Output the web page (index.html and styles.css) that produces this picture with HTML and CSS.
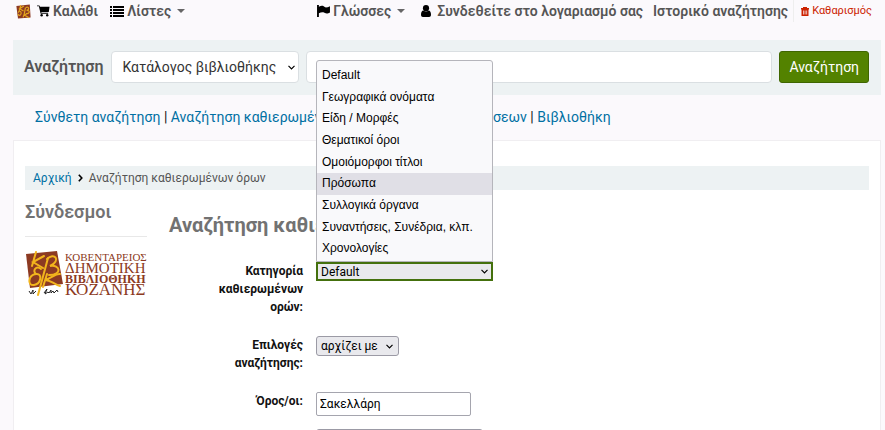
FILE: index.html
```html
<!DOCTYPE html>
<html lang="el">
<head>
    <meta charset="UTF-8">
    <meta name="viewport" content="width=device-width, initial-scale=1">
    <title>Αναζήτηση καθιερωμένων όρων</title>

    <link rel="stylesheet" href="styles.css">
</head>
<body>
    <nav class="navbar">
        <a class="brand" href="#" aria-label="Αρχική">
            <svg width="15" height="15" viewBox="0 0 38 38">
                <path fill="#8c3a22" d="M1 5 35 1 37 34 5 37z"/>
                <path fill="none" stroke="#e3a51d" stroke-width="3" d="M12 3 8 18M20 5 9 12 19 18M24 9 20 30M25 9c8-4 10 5 2 7 10 0 8 10-2 8M6 22c0-6 8-4 7 2s-7 7-8 1M18 34l4-12M33 22 21 28 33 35"/>
            </svg>
        </a>
        <a class="nav-link cart" href="#">
            <svg width="13" height="12" viewBox="0 0 14 12">
                <path d="M0 0h2.600l.6 1.500H13.500L12.700 7H4.600l.2 1H12v1H3.900L2 1H0z"/>
                <circle cx="5" cy="10.500" r="1.300"/><circle cx="11" cy="10.500" r="1.300"/>
            </svg>
            Καλάθι
        </a>
        <a class="nav-link lists" href="#">
            <svg width="14" height="11" viewBox="0 0 14 11">
                <path d="M0 0h2v2H0zM3 0h11v2H3zM0 3h2v2H0zM3 3h11v2H3zM0 6h2v2H0zM3 6h11v2H3zM0 9h2v2H0zM3 9h11v2H3z"/>
            </svg>
            Λίστες <span class="caret"></span>
        </a>
        <a class="nav-link langs" href="#">
            <svg width="13" height="12" viewBox="0 0 14 13">
                <path d="M0 0h2v13H0zM2 2c3-2 5-1 6 0s3 1 6-.6V8c-3 1.700-4 1.200-6 .4S4 8 2 9z"/>
            </svg>
            Γλώσσες <span class="caret"></span>
        </a>
        <a class="nav-link login" href="#">
            <svg width="10" height="12" viewBox="0 0 11 13">
                <circle cx="5.500" cy="3.400" r="3.400"/>
                <path d="M2.600 6c2 1.500 4 1.500 5.800 0C10 6 11 8 11 10.500 11 12 10 13 9 13H2c-1 0-2-1-2-2.500C0 8 1 6 2.600 6z"/>
            </svg>
            Συνδεθείτε στο λογαριασμό σας
        </a>
        <a class="nav-link history" href="#">Ιστορικό αναζήτησης</a>
        <a class="clear" href="#">
            <svg width="8" height="9" viewBox="0 0 8 9">
                <path fill="#cc2200" fill-rule="evenodd" d="M2 0h4v1h2v1.500H7.500V9h-7V2.500H0V1h2zM2 3.500v4h.7v-4zM3.700 3.500v4h.7v-4zM5.400 3.500v4h.7v-4z"/>
            </svg>
            Καθαρισμός
        </a>
    </nav>

    <form class="search-bar">
        <label for="index">Αναζήτηση</label>
        <select id="index" class="search-index">
            <option>Κατάλογος βιβλιοθήκης</option>
        </select>
        <input type="text" class="search-text" aria-label="Αναζήτηση">
        <button type="submit" class="btn">Αναζήτηση</button>
    </form>

    <div class="more-searches">
        <a href="#">Σύνθετη αναζήτηση</a> |
        <a href="#">Αναζήτηση καθιερωμένων όρων</a> |
        <a href="#">Σύννεφο σημειώσεων</a> |
        <a href="#">Βιβλιοθήκη</a>
    </div>

    <main class="main">
        <nav class="breadcrumb">
            <a href="#">Αρχική</a>
            <svg width="5" height="8" viewBox="0 0 5 8"><path fill="none" stroke="#000" stroke-width="1.600" d="M.8.800 3.800 4 .8 7.200"/></svg>
            <span>Αναζήτηση καθιερωμένων όρων</span>
        </nav>

        <div class="columns">
            <aside class="side">
                <h2>Σύνδεσμοι</h2>
                <a href="#" aria-label="Κοβεντάρειος Δημοτική Βιβλιοθήκη Κοζάνης">
                    <svg class="logo" viewBox="0 0 122 48">
                        <path fill="#8c3a22" d="M1 3 32 0 38 33 5 37z"/>
                        <g fill="none" stroke="#f2b51d" stroke-width="2" stroke-linecap="round">
                            <path d="M11 1 7 15M19 5 8 11 18 17"/>
                            <path d="M23 7 13 44"/>
                            <path d="M22 8c7-7 15 1 3 7 10-2 13 9-1 9"/>
                            <path d="M16 18c-5-4-9 2-5 5-8 1-9 12-2 11s9-12 2-11"/>
                            <path d="M22 23 18 36M35 23c-4-1-8 4-15 6 6 0 8 4 15 6"/>
                        </g>
                        <path fill="none" stroke="#222" d="M4 40l2 3 2-4v4l3-3M19 42l3-4-2 5 3-2 1 1 2-3v3l2-2 1 2 3-3 1 2"/>
                        <g class="logo-text" fill="#8c3a22">
                            <text class="narrow" x="40" y="10">ΚΟΒΕΝΤΑΡΕΙΟΣ</text>
                            <text class="wide" x="40" y="22">ΔΗΜΟΤΙΚΗ</text>
                            <text class="heavy" x="40" y="32">ΒΙΒΛΙΟΘΗΚΗ</text>
                            <text class="large" x="40" y="44">ΚΟΖΑΝΗΣ</text>
                        </g>
                    </svg>
                </a>
            </aside>

            <section class="content">
                <h1>Αναζήτηση καθιερωμένων όρων</h1>
                <form class="auth-form">
                    <label for="category">Κατηγορία καθιερωμένων ορών:</label>
                    <div class="field picker">
                        <select id="category" class="category">
                            <option>Default</option>
                        </select>
                        <ul class="options">
                            <li>Default</li>
                            <li>Γεωγραφικά ονόματα</li>
                            <li>Είδη / Μορφές</li>
                            <li>Θεματικοί όροι</li>
                            <li>Ομοιόμορφοι τίτλοι</li>
                            <li class="active">Πρόσωπα</li>
                            <li>Συλλογικά όργανα</li>
                            <li>Συναντήσεις, Συνέδρια, κλπ.</li>
                            <li>Χρονολογίες</li>
                        </ul>
                    </div>

                    <label for="operator">Επιλογές αναζήτησης:</label>
                    <div class="field">
                        <select id="operator" class="operator">
                            <option>αρχίζει με</option>
                        </select>
                    </div>

                    <label for="term">Όρος/οι:</label>
                    <div class="field">
                        <input type="text" id="term" class="term" value="Σακελλάρη">
                        <select class="where" aria-label="Πεδίο"></select>
                    </div>
                </form>
            </section>
        </div>
    </main>
</body>
</html>
```
FILE: styles.css
```css
* {
    box-sizing: border-box;
}
html {
    overflow: hidden;
}
body {
    margin: 0;
    padding: 0 4px 0 13px;
    background: #fbf9fc;
    color: #111;
    font: 14px/18px Roboto, "Liberation Sans", sans-serif;
}
a {
    color: #0070a3;
    text-decoration: none;
}
select, input, button {
    font-family: inherit;
    margin: 0;
}

/* top bar */
.navbar {
    display: flex;
    align-items: center;
    height: 22px;
    margin-bottom: 18px;
    white-space: nowrap;
}
.brand {
    display: flex;
    margin: 0 6px 0 3px;
}
.nav-link {
    display: flex;
    align-items: center;
    gap: 3px;
    color: #555;
    font-size: 14px;
    font-weight: 600;
}
.nav-link svg {
    fill: #000;
}
.lists {
    margin-left: 12px;
}
.langs {
    margin-left: auto;
}
.login {
    gap: 6px;
    margin-left: 16px;
}
.history {
    margin: 0 5px 0 10px;
}
.clear {
    display: flex;
    align-items: center;
    align-self: stretch;
    gap: 3px;
    padding: 0 9px 0 7px;
    border-left: 1px solid #eee;
    color: #cc2200;
    font-size: 11px;
}
.caret {
    margin-left: 3px;
    border: 4px solid transparent;
    border-top-color: #666;
    border-bottom: 0;
}

/* search */
.search-bar {
    display: flex;
    align-items: center;
    gap: 7px;
    padding: 11px 12px 12px 11px;
    background: #edf2f3;
}
.search-bar label {
    color: #555;
    font-size: 16px;
    font-weight: 600;
}
.search-index, .category, .operator, .where {
    appearance: none;
    background: #fff url("data:image/svg+xml,%3Csvg xmlns='http://www.w3.org/2000/svg' width='7' height='5'%3E%3Cpath d='M.5.8 3.500 3.800 6.500.8' fill='none' stroke='%23000' stroke-width='1.200'/%3E%3C/svg%3E") no-repeat right 3px center;
}
.search-index, .search-text {
    height: 32px;
    border: 1px solid #dadfe2;
    border-radius: 4px;
    background-color: #fff;
}
.search-index {
    width: 188px;
    padding: 0 11px;
    color: #333;
    font-size: 14px;
}
.search-text {
    flex: 1;
    min-width: 0;
}
.btn {
    height: 32px;
    padding: 0 9px;
    border: 1px solid #3f6600;
    border-radius: 3px;
    background: #538200;
    color: #fff;
    font-size: 14px;
}
.more-searches {
    padding: 13px 22px 14px;
}

/* page body */
.main {
    padding: 25px 11px;
    border: 1px solid #f0eef1;
    background: #fff;
}
.breadcrumb {
    display: flex;
    align-items: center;
    gap: 6px;
    padding: 3px 8px;
    background: #edf2f3;
    color: #555;
    font-size: 12px;
}
.columns {
    display: flex;
    gap: 22px;
}
.side {
    width: 122px;
    flex: none;
}
.side h2 {
    margin: 0 0 14px;
    padding: 12px 0 14px;
    border-bottom: 1px solid #e8e8e8;
    color: #727272;
    font-size: 18px;
    font-weight: 600;
    line-height: 20px;
}
.logo {
    display: block;
    width: 100%;
}
.logo-text {
    font-family: "Liberation Serif", serif;
}
.narrow {
    font-size: 11px;
}
.wide {
    font-size: 15px;
}
.heavy {
    font-size: 12px;
    font-weight: 700;
}
.large {
    font-size: 17px;
}
.content {
    flex: 1;
}
h1 {
    margin: 22px 0 24px;
    color: #727272;
    font-size: 20px;
    line-height: 26px;
}
.auth-form {
    display: grid;
    grid-template-columns: 134px 1fr;
    gap: 20px 13px;
}
.auth-form label {
    padding-left: 40px;
    font-size: 12px;
    font-weight: 700;
    text-align: right;
}
.picker {
    position: relative;
}
.category {
    display: block;
    width: 177px;
    height: 19px;
    padding: 0 3px;
    border: 2px solid #44700d;
    background-color: #e9e9ed;
    font-size: 12px;
}
.options {
    display: grid;
    position: absolute;
    bottom: 100%;
    left: 0;
    width: 177px;
    height: 202px;
    margin: 0;
    padding: 4px 0 1px;
    border: 1px solid #b5b5bb;
    border-radius: 3px 3px 0 0;
    background: #f9f9fb;
    color: #000;
    font: 12px/21px "Liberation Sans", sans-serif;
    list-style: none;
}
.options li {
    padding: 0 5px;
}
.active {
    background: #e0dfe6;
}
.operator {
    display: block;
    width: 83px;
    height: 20px;
    padding: 0 4px;
    border: 1px solid #9b9aa5;
    border-radius: 3px;
    background-color: #e9e9ed;
    background-position: right 5px center;
    font-size: 12px;
}
.term {
    display: block;
    width: 155px;
    height: 24px;
    margin-bottom: 13px;
    padding: 0 3px;
    border: 1px solid #a5a5ae;
    border-radius: 2px;
    font-size: 12px;
}
.where {
    display: block;
    width: 167px;
    height: 20px;
    border: 1px solid #9b9aa5;
    border-radius: 3px;
    background-color: #e9e9ed;
}
```
